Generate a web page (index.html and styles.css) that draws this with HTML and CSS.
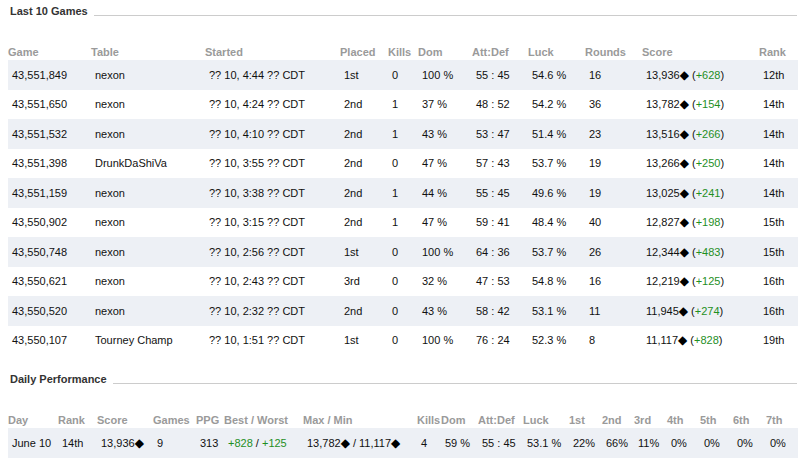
FILE: index.html
```html
<!DOCTYPE html>
<html>
<head>
<meta charset="utf-8">
<link rel="stylesheet" href="styles.css">
</head>
<body>
<div class="page">
  <h2 class="section-title">Last 10 Games</h2>
  <table class="grid games">
    <colgroup>
      <col class="c83"><col class="c114"><col class="c135"><col class="c48"><col class="c30"><col class="c54"><col class="c56"><col class="c57"><col class="c57"><col class="c117"><col>
    </colgroup>
    <thead>
      <tr><th>Game</th><th>Table</th><th>Started</th><th>Placed</th><th>Kills</th><th>Dom</th><th>Att:Def</th><th>Luck</th><th>Rounds</th><th>Score</th><th>Rank</th></tr>
    </thead>
    <tbody>
      <tr><td>43,551,849</td><td>nexon</td><td>?? 10, 4:44 ?? CDT</td><td>1st</td><td>0</td><td>100 %</td><td>55 : 45</td><td>54.6 %</td><td>16</td><td>13,936<span class="gem">◆</span> (<span class="up">+628</span>)</td><td>12th</td></tr>
      <tr><td>43,551,650</td><td>nexon</td><td>?? 10, 4:24 ?? CDT</td><td>2nd</td><td>1</td><td>37 %</td><td>48 : 52</td><td>54.2 %</td><td>36</td><td>13,782<span class="gem">◆</span> (<span class="up">+154</span>)</td><td>14th</td></tr>
      <tr><td>43,551,532</td><td>nexon</td><td>?? 10, 4:10 ?? CDT</td><td>2nd</td><td>1</td><td>43 %</td><td>53 : 47</td><td>51.4 %</td><td>23</td><td>13,516<span class="gem">◆</span> (<span class="up">+266</span>)</td><td>14th</td></tr>
      <tr><td>43,551,398</td><td>DrunkDaShiVa</td><td>?? 10, 3:55 ?? CDT</td><td>2nd</td><td>0</td><td>47 %</td><td>57 : 43</td><td>53.7 %</td><td>19</td><td>13,266<span class="gem">◆</span> (<span class="up">+250</span>)</td><td>14th</td></tr>
      <tr><td>43,551,159</td><td>nexon</td><td>?? 10, 3:38 ?? CDT</td><td>2nd</td><td>1</td><td>44 %</td><td>55 : 45</td><td>49.6 %</td><td>19</td><td>13,025<span class="gem">◆</span> (<span class="up">+241</span>)</td><td>14th</td></tr>
      <tr><td>43,550,902</td><td>nexon</td><td>?? 10, 3:15 ?? CDT</td><td>2nd</td><td>1</td><td>47 %</td><td>59 : 41</td><td>48.4 %</td><td>40</td><td>12,827<span class="gem">◆</span> (<span class="up">+198</span>)</td><td>15th</td></tr>
      <tr><td>43,550,748</td><td>nexon</td><td>?? 10, 2:56 ?? CDT</td><td>1st</td><td>0</td><td>100 %</td><td>64 : 36</td><td>53.7 %</td><td>26</td><td>12,344<span class="gem">◆</span> (<span class="up">+483</span>)</td><td>15th</td></tr>
      <tr><td>43,550,621</td><td>nexon</td><td>?? 10, 2:43 ?? CDT</td><td>3rd</td><td>0</td><td>32 %</td><td>47 : 53</td><td>54.8 %</td><td>16</td><td>12,219<span class="gem">◆</span> (<span class="up">+125</span>)</td><td>16th</td></tr>
      <tr><td>43,550,520</td><td>nexon</td><td>?? 10, 2:32 ?? CDT</td><td>2nd</td><td>0</td><td>43 %</td><td>58 : 42</td><td>53.1 %</td><td>11</td><td>11,945<span class="gem">◆</span> (<span class="up">+274</span>)</td><td>16th</td></tr>
      <tr><td>43,550,107</td><td>Tourney Champ</td><td>?? 10, 1:51 ?? CDT</td><td>1st</td><td>0</td><td>100 %</td><td>76 : 24</td><td>52.3 %</td><td>8</td><td>11,117<span class="gem">◆</span> (<span class="up">+828</span>)</td><td>19th</td></tr>
    </tbody>
  </table>

  <h2 class="section-title daily-title">Daily Performance</h2>
  <table class="grid daily">
    <colgroup>
      <col class="c50"><col class="c39"><col class="c56"><col class="c43"><col class="c28"><col class="c79"><col class="c114"><col class="c24"><col class="c37"><col class="c45"><col class="c46"><col class="c33"><col class="c32"><col class="c33"><col class="c33"><col class="c33"><col class="c33"><col>
    </colgroup>
    <thead>
      <tr><th>Day</th><th>Rank</th><th>Score</th><th>Games</th><th>PPG</th><th>Best / Worst</th><th>Max / Min</th><th>Kills</th><th>Dom</th><th>Att:Def</th><th>Luck</th><th>1st</th><th>2nd</th><th>3rd</th><th>4th</th><th>5th</th><th>6th</th><th>7th</th></tr>
    </thead>
    <tbody>
      <tr><td>June 10</td><td>14th</td><td>13,936<span class="gem">◆</span></td><td>9</td><td>313</td><td><span class="up">+828</span> / <span class="up">+125</span></td><td>13,782<span class="gem">◆</span> / 11,117<span class="gem">◆</span></td><td>4</td><td>59 %</td><td>55 : 45</td><td>53.1 %</td><td>22%</td><td>66%</td><td>11%</td><td>0%</td><td>0%</td><td>0%</td><td>0%</td></tr>
    </tbody>
  </table>
</div>
</body>
</html>
```

FILE: styles.css
```css
html, body {
  margin: 0;
  padding: 0;
  background: #ffffff;
}

.page {
  padding: 4px 3px 0 8px;
  width: 790px;
  font-family: "Liberation Sans", Arial, sans-serif;
  font-size: 11px;
  color: #111111;
}

.section-title {
  display: flex;
  align-items: center;
  height: 13px;
  margin: 0;
  padding: 1px 0 0 2px;
  font-size: 11px;
  line-height: 13px;
  font-weight: bold;
  color: #333333;
}

.section-title::after {
  content: "";
  flex: 1;
  height: 1px;
  margin-left: 6px;
  margin-top: 8px;
  margin-right: 1px;
  background: #cccccc;
}

.daily-title {
  margin-top: 17px;
}

.grid {
  margin-top: 25px;
  width: 790px;
  table-layout: fixed;
  border-collapse: collapse;
  border-spacing: 0;
}

.grid th {
  height: 17px;
  padding: 0;
  text-align: left;
  vertical-align: middle;
  font-weight: bold;
  color: #9a9a9a;
  white-space: nowrap;
  overflow: visible;
}

.grid td {
  height: 29.5px;
  padding: 0 0 0 4px;
  text-align: left;
  vertical-align: middle;
  white-space: nowrap;
  overflow: visible;
}

.grid tbody tr:nth-child(odd) td {
  background: #edf0f5;
}

.gem {
  font-family: "DejaVu Sans", sans-serif;
  font-size: 12px;
  line-height: 1;
  color: #000000;
}

.up {
  color: #1f8f1f;
}

.c24 { width: 24px; }
.c28 { width: 28px; }
.c30 { width: 30px; }
.c32 { width: 32px; }
.c33 { width: 33px; }
.c37 { width: 37px; }
.c39 { width: 39px; }
.c43 { width: 43px; }
.c45 { width: 45px; }
.c46 { width: 46px; }
.c48 { width: 48px; }
.c50 { width: 50px; }
.c54 { width: 54px; }
.c56 { width: 56px; }
.c57 { width: 57px; }
.c79 { width: 79px; }
.c83 { width: 83px; }
.c114 { width: 114px; }
.c117 { width: 117px; }
.c135 { width: 135px; }
```
